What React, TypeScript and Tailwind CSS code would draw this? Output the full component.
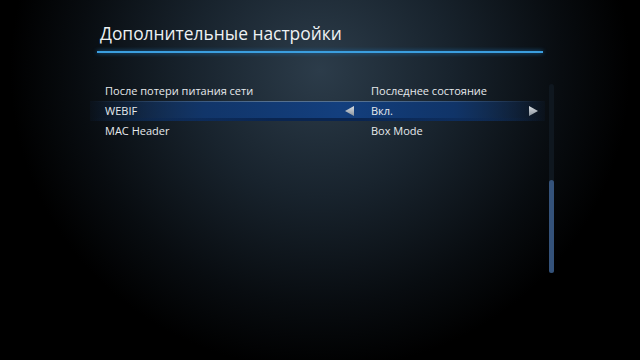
const rows = [
  { label: "После потери питания сети", value: "Последнее состояние" },
  { label: "WEBIF", value: "Вкл.", selected: true },
  { label: "MAC Header", value: "Box Mode" },
];

function Arrow({ dir }: { dir: "left" | "right" }) {
  return (
    <svg width="9" height="10" viewBox="0 0 9 10" className="shrink-0">
      <defs>
        <linearGradient id={`ar-${dir}`} x1="0" y1="0" x2="0" y2="1">
          <stop offset="0" stopColor="#d8dde2" />
          <stop offset="1" stopColor="#8a939c" />
        </linearGradient>
      </defs>
      <path d={dir === "left" ? "M9 0 L9 10 L0 5 Z" : "M0 0 L0 10 L9 5 Z"} fill={`url(#ar-${dir})`} />
    </svg>
  );
}

export default function App() {
  return (
    <div
      className="w-[640px] h-[360px] overflow-hidden bg-black text-[#e6e9ec]"
      style={{
        background:
          "radial-gradient(ellipse 310px 300px at 320px 70px, #2c3c4a 0%, #18232d 42%, #080c10 78%, #000 100%)",
        fontFamily: '"Open Sans", "Noto Sans", sans-serif',
      }}
    >
      <div className="pl-[97px] pr-[97px] pt-[20px]">
        <h1 className="pl-[3px] text-[17.4px] leading-[26px] text-[#eef1f3]">Дополнительные настройки</h1>
        <div className="mt-[5px] h-[2px] bg-[#3b9ede] shadow-[0_0_4px_#1f6fae]" />
      </div>

      <div className="flex pl-[90px] pt-[28px]">
        <div className="w-[455px]">
          {rows.map((r) => (
            <div key={r.label} className="relative flex items-center h-[20px] text-[11px]">
              {r.selected && (
                <div className="absolute inset-0 bg-[linear-gradient(90deg,rgba(18,45,90,0.1)_0%,#113569_25%,#133f7e_55%,#103468_80%,rgba(18,45,90,0.1)_100%)]">
                  <div className="absolute inset-x-0 top-0 h-[1px] bg-[linear-gradient(90deg,transparent,#55708f_40%,#55708f_60%,transparent)]" />
                  <div className="absolute inset-x-0 bottom-0 h-[3px] bg-[linear-gradient(90deg,transparent,#0a2550_40%,#0a2550_60%,transparent)]" />
                </div>
              )}
              <div className="relative flex w-full items-center">
                <span className="w-[255px] pl-[15px]">{r.label}</span>
                <span className="w-[26px] flex justify-start">{r.selected && <Arrow dir="left" />}</span>
                <span className="flex-1">{r.value}</span>
                <span className="w-[16px] flex">{r.selected && <Arrow dir="right" />}</span>
              </div>
            </div>
          ))}
        </div>
        <div className="ml-[4px] mt-[3px] flex h-[189px] w-[5px] flex-col rounded-full bg-[#0f171f]">
          <div className="flex-1" />
          <div className="h-[93px] rounded-full bg-[#34527a]" />
        </div>
      </div>
    </div>
  );
}
